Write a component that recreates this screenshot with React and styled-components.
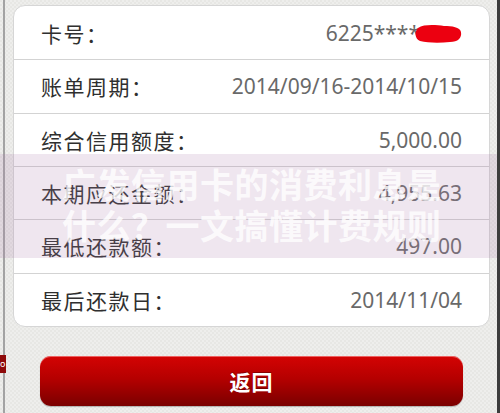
import React from "react";
import styled, { createGlobalStyle } from "styled-components";

const Global = createGlobalStyle`
  html, body { margin: 0; padding: 0; }
  body {
    width: 500px;
    height: 413px;
    overflow: hidden;
    font-family: "Noto Sans", "Noto Sans CJK SC", sans-serif;
  }
`;

const Page = styled.div`
  position: relative;
  box-sizing: border-box;
  width: 500px;
  height: 413px;
  padding: 5px 10px 0 13px;
  display: flex;
  flex-direction: column;
  background:
    linear-gradient(to right, transparent 3px, #a3a3a3 3px, #a3a3a3 5px, transparent 5px),
    linear-gradient(to left, #3c3c3c 3px, transparent 3px),
    repeating-conic-gradient(#eeeeec 0 25%, #e7e7e4 0 50%) 0 0 / 4px 4px;
`;

const Card = styled.div`
  box-sizing: border-box;
  width: 477px;
  height: 322px;
  background: #ffffff;
  border: 1px solid #d6d6d6;
  border-radius: 12px;
  display: grid;
  grid-template-rows: repeat(6, 1fr);
  overflow: hidden;
`;

const Row = styled.div`
  display: flex;
  align-items: center;
  justify-content: space-between;
  padding: 0 27px;
  border-top: ${(p) => (p.$first ? "none" : "1px solid #d3d3d3")};
`;

const Label = styled.span`
  font-family: "Noto Sans CJK SC", "Noto Sans", sans-serif;
  font-size: 21px;
  color: #2f2f2f;
  letter-spacing: 1.5px;
`;

const Value = styled.span`
  display: inline-flex;
  align-items: center;
  font-family: "Noto Sans", "Noto Sans CJK SC", sans-serif;
  font-size: 21px;
  color: #696969;
`;

const Scribble = styled.svg`
  margin-left: -6px;
  width: 48px;
  height: 22px;
`;

const Button = styled.button`
  margin: 29px 0 0 27px;
  width: 423px;
  height: 50px;
  border: none;
  border-radius: 11px;
  background: linear-gradient(to bottom, #d40303 0%, #b50000 45%, #7a0000 100%);
  box-shadow: inset 0 1px 0 rgba(255, 160, 160, 0.6), 0 1px 1px rgba(0, 0, 0, 0.25);
  color: #ffffff;
  font-family: "Noto Sans CJK SC", sans-serif;
  font-weight: 700;
  font-size: 21px;
  letter-spacing: 1px;
  text-shadow: 0 -1px 0 rgba(80, 0, 0, 0.5);
  display: flex;
  align-items: center;
  justify-content: center;
  padding: 0;
`;

const EdgeTab = styled.div`
  position: absolute;
  left: 0;
  top: 355px;
  width: 6px;
  height: 18px;
  background: #8e0a0a;
  color: #fff;
  font-size: 9px;
  line-height: 18px;
  overflow: hidden;
  font-family: "Noto Sans", sans-serif;
`;

const Tint = styled.div`
  position: absolute;
  left: 0;
  right: 3px;
  top: 154px;
  height: 104px;
  background: rgba(175, 130, 175, 0.2);
  pointer-events: none;
`;

const Watermark = styled.div`
  position: absolute;
  left: 62px;
  top: 163px;
  font-family: "Noto Sans CJK SC", sans-serif;
  font-weight: 700;
  font-size: 34px;
  line-height: 41px;
  letter-spacing: 0.5px;
  color: rgba(255, 255, 255, 0.8);
  white-space: pre;
  pointer-events: none;
`;

const rows = [
  { label: "卡号：", value: "6225****", masked: true },
  { label: "账单周期：", value: "2014/09/16-2014/10/15" },
  { label: "综合信用额度：", value: "5,000.00" },
  { label: "本期应还金额：", value: "4,955.63" },
  { label: "最低还款额：", value: "497.00" },
  { label: "最后还款日：", value: "2014/11/04" },
];

export default function App() {
  return (
    <>
      <Global />
      <Page>
        <Card>
          {rows.map((r, i) => (
            <Row key={r.label} $first={i === 0}>
              <Label>{r.label}</Label>
              <Value>
                {r.value}
                {r.masked && (
                  <Scribble viewBox="0 0 48 22">
                    <path
                      d="M4 6 C10 2 22 3 30 4 C38 4 46 5 47 10 C48 16 44 20 36 20 C26 21 14 21 6 19 C1 17 0 10 4 6 Z"
                      fill="#ec0010"
                    />
                  </Scribble>
                )}
              </Value>
            </Row>
          ))}
        </Card>
        <Button>返回</Button>
        <EdgeTab>o</EdgeTab>
        <Tint />
        <Watermark>{"广发信用卡的消费利息是\n什么？一文搞懂计费规则"}</Watermark>
      </Page>
    </>
  );
}
